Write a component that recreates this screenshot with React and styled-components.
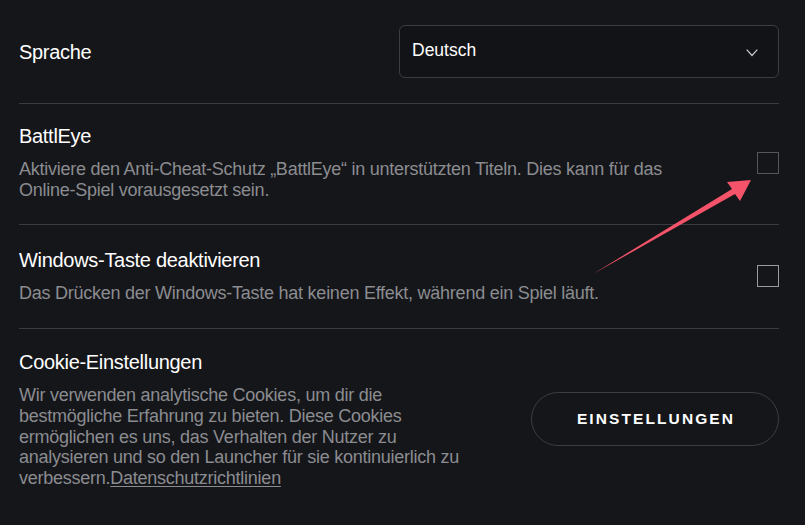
import React from "react";
import styled, { createGlobalStyle } from "styled-components";

const GlobalStyle = createGlobalStyle`
  html, body {
    margin: 0;
    padding: 0;
    background: #15161a;
  }
  body {
    font-family: "Liberation Sans", Arial, sans-serif;
    color: #ffffff;
  }
`;

const Page = styled.div`
  position: relative;
  width: 805px;
  height: 525px;
  overflow: hidden;
  padding: 0 26px 0 19px;
  box-sizing: border-box;
  background: #15161a;
`;

const Row = styled.section`
  display: flex;
  align-items: center;
  justify-content: space-between;
  gap: 24px;
  padding: ${(p) => p.$pad || "20px 0 23px"};
  border-bottom: ${(p) => (p.$last ? "none" : "1px solid #3a3b3f")};
`;

const TextCol = styled.div`
  display: flex;
  flex-direction: column;
  gap: ${(p) => p.$gap || "11px"};
  max-width: ${(p) => p.$max || "none"};
`;

const Title = styled.h3`
  margin: 0;
  font-size: 20px;
  line-height: 24px;
  font-weight: 400;
  letter-spacing: -0.3px;
  color: #ffffff;
`;

const Desc = styled.p`
  margin: 0;
  font-size: 18px;
  line-height: ${(p) => p.$lh || "21px"};
  letter-spacing: -0.25px;
  color: #8b8c90;
`;

const Link = styled.a`
  color: #8b8c90;
  text-decoration: underline;
  text-underline-offset: 2px;
`;

const Select = styled.div`
  display: flex;
  align-items: center;
  justify-content: space-between;
  width: 380px;
  height: 53px;
  box-sizing: border-box;
  padding: 0 20px 3px 12px;
  border: 1px solid #3c3d41;
  border-radius: 6px;
  background: #121317;
  font-size: 17.5px;
  color: #ffffff;
`;

const Chevron = styled.svg`
  width: 12px;
  height: 8px;
  margin-top: 6px;
`;

const Checkbox = styled.span`
  flex: none;
  width: 22px;
  height: 22px;
  box-sizing: border-box;
  border: 1.5px solid ${(p) => (p.$muted ? "#55565a" : "#9a9b9e")};
`;

const PillButton = styled.button`
  flex: none;
  width: 248px;
  height: 54px;
  border: 1px solid #3c3d41;
  border-radius: 27px;
  background: transparent;
  color: #ffffff;
  font-family: "Liberation Sans", Arial, sans-serif;
  font-size: 15.5px;
  font-weight: 700;
  letter-spacing: 2.1px;
  padding: 0 0 0 2px;
  cursor: pointer;
`;

const Pointer = styled.svg`
  position: absolute;
  left: 0;
  top: 0;
  width: 805px;
  height: 525px;
  pointer-events: none;
`;

export default function App() {
  return (
    <>
      <GlobalStyle />
      <Page>
        <Row $pad="25px 0 25px">
          <Title>Sprache</Title>
          <Select>
            <span>Deutsch</span>
            <Chevron viewBox="0 0 12 8">
              <polyline
                points="0.7,0.7 6,6.5 11.3,0.7"
                fill="none"
                stroke="#c9c9cb"
                strokeWidth="1.2"
              />
            </Chevron>
          </Select>
        </Row>

        <Row>
          <TextCol>
            <Title>BattlEye</Title>
            <Desc>
              Aktiviere den Anti-Cheat-Schutz „BattlEye“ in unterstützten Titeln. Dies kann für das
              <br />
              Online-Spiel vorausgesetzt sein.
            </Desc>
          </TextCol>
          <Checkbox $muted />
        </Row>

        <Row $pad="23px 0 24px">
          <TextCol>
            <Title>Windows-Taste deaktivieren</Title>
            <Desc>Das Drücken der Windows-Taste hat keinen Effekt, während ein Spiel läuft.</Desc>
          </TextCol>
          <Checkbox />
        </Row>

        <Row $pad="21px 0 20px" $last>
          <TextCol $gap="11px" $max="470px">
            <Title>Cookie-Einstellungen</Title>
            <Desc $lh="20.75px">
              Wir verwenden analytische Cookies, um dir die bestmögliche Erfahrung zu bieten. Diese
              Cookies ermöglichen es uns, das Verhalten der Nutzer zu analysieren und so den Launcher
              für sie kontinuierlich zu verbessern.<Link href="#">Datenschutzrichtlinien</Link>
            </Desc>
          </TextCol>
          <PillButton>EINSTELLUNGEN</PillButton>
        </Row>

        <Pointer viewBox="0 0 805 525">
          <polygon
            points="593,274 732,188.9 727,182 751,180 740,201 735,194.1"
            fill="#f4536a"
          />
        </Pointer>
      </Page>
    </>
  );
}
